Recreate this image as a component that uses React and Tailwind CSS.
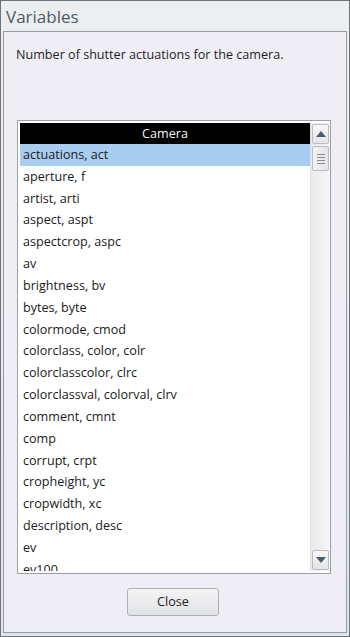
import React from "react";

const items = [
  "actuations, act",
  "aperture, f",
  "artist, arti",
  "aspect, aspt",
  "aspectcrop, aspc",
  "av",
  "brightness, bv",
  "bytes, byte",
  "colormode, cmod",
  "colorclass, color, colr",
  "colorclasscolor, clrc",
  "colorclassval, colorval, clrv",
  "comment, cmnt",
  "comp",
  "corrupt, crpt",
  "cropheight, yc",
  "cropwidth, xc",
  "description, desc",
  "ev",
  "ev100",
];

const ScrollBar = () => (
  <div className="w-[20px] h-full flex flex-col bg-gradient-to-r from-[#eaeaea] to-[#f6f6f6] border-l border-[#e0e0e0] py-[1px] px-[1px]">
    <div className="h-[20px] rounded-[2px] border border-[#b9bcc0] bg-gradient-to-b from-[#f7f7f7] to-[#e3e4e6] flex items-center justify-center">
      <svg width="10" height="6" viewBox="0 0 10 6">
        <path d="M0 6 L5 0 L10 6 Z" fill="#4b5b72" />
      </svg>
    </div>
    <div className="mt-[2px] h-[25px] rounded-[2px] border border-[#b9bcc0] bg-gradient-to-r from-[#f2f2f2] to-[#e4e5e7] flex flex-col items-center justify-center gap-[2px]">
      <div className="w-[8px] h-[1px] bg-[#8a8d92]" />
      <div className="w-[8px] h-[1px] bg-[#8a8d92]" />
      <div className="w-[8px] h-[1px] bg-[#8a8d92]" />
      <div className="w-[8px] h-[1px] bg-[#8a8d92]" />
    </div>
    <div className="flex-1" />
    <div className="h-[20px] rounded-[2px] border border-[#b9bcc0] bg-gradient-to-b from-[#f7f7f7] to-[#e3e4e6] flex items-center justify-center">
      <svg width="10" height="6" viewBox="0 0 10 6">
        <path d="M0 0 L10 0 L5 6 Z" fill="#4b5b72" />
      </svg>
    </div>
  </div>
);

export default function App() {
  return (
    <div
      className="w-[350px] h-[637px] border border-[#6c7379] bg-gradient-to-b from-[#eceef0] to-[#e4e7ea] flex flex-col px-[2px] pb-[3px] text-[#1b1b1b]"
      style={{ fontFamily: '"Open Sans", "Noto Sans", sans-serif' }}
    >
      {/* title */}
      <div className="h-[30px] pl-[3px] pt-[5px] text-[17px] leading-[22px] text-[#4f5a66]">
        Variables
      </div>

      {/* panel */}
      <div className="flex-1 border border-[#989ca1] bg-[#eeeef4] flex flex-col">
        <div className="pl-[12px] pt-[15px] text-[12.6px] leading-[16px] text-[#1e1e2a]">
          Number of shutter actuations for the camera.
        </div>

        {/* listbox */}
        <div className="ml-[13px] mt-[57px] w-[314px] h-[454px] border border-[#9da1a6] bg-white flex p-[2px] pr-0">
          <div className="flex-1 overflow-hidden flex flex-col">
            <div className="h-[21px] shrink-0 bg-black text-[#f4f4f4] text-[12.6px] leading-[21px] text-center">
              Camera
            </div>
            {items.map((item, i) => (
              <div
                key={item}
                className={`h-[21.83px] shrink-0 pl-[3px] text-[12.6px] leading-[21.83px] text-[#1a1a1a] ${
                  i === 0 ? "bg-[#a9cdf1]" : ""
                }`}
              >
                {item}
              </div>
            ))}
          </div>
          <ScrollBar />
        </div>

        <div className="flex justify-center mt-[14px] pr-[4px]">
          <button className="w-[92px] h-[28px] rounded-[3px] border border-[#adb1b6] bg-gradient-to-b from-[#f4f4f5] to-[#e2e3e6] text-[12.6px] text-[#1e1e1e]">
            Close
          </button>
        </div>
      </div>
    </div>
  );
}
